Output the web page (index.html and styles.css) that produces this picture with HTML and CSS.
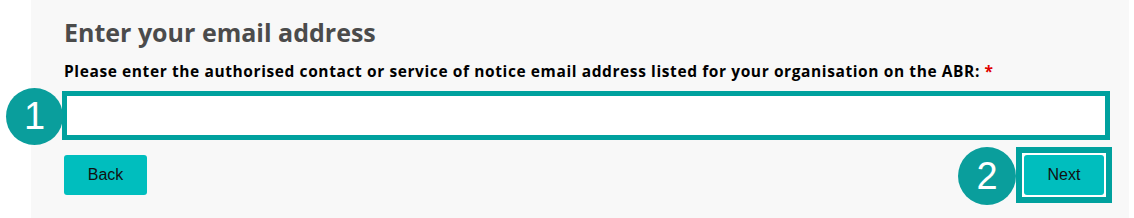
FILE: index.html
```html
<!DOCTYPE html>
<html lang="en">
<head>
<meta charset="utf-8">
<link rel="stylesheet" href="styles.css">
</head>
<body>
<div class="panel">
  <h2 class="title">Enter your email address</h2>
  <label class="label" for="email">Please enter the authorised contact or service of notice email address listed for your organisation on the ABR: <span class="req">*</span></label>
  <div class="field">
    <span class="marker marker-1">1</span>
    <input id="email" class="input" type="text">
  </div>
  <div class="actions">
    <button class="btn">Back</button>
    <div class="next-wrap">
      <span class="marker marker-2">2</span>
      <div class="highlight"><button class="btn btn-next">Next</button></div>
    </div>
  </div>
</div>
</body>
</html>
```
FILE: styles.css
```css
html, body {
  margin: 0;
  padding: 0;
  background: #ffffff;
}
.panel {
  margin-left: 31px;
  width: 1098px;
  height: 218px;
  box-sizing: border-box;
  background: #f8f8f8;
  padding: 17px 0 0 33px;
  font-family: "Open Sans", sans-serif;
}
.title {
  margin: 0;
  font-size: 25px;
  font-weight: 700;
  color: #4b4b4b;
  line-height: 30px;
}
.label {
  display: block;
  margin-top: 14px;
  font-size: 15.5px;
  font-weight: 700;
  letter-spacing: 0.6px;
  color: #000;
  line-height: 20px;
}
.req { color: #e00000; }
.field {
  position: relative;
  margin-top: 10px;
  margin-left: -2px;
  width: 1048px;
}
.input {
  display: block;
  box-sizing: border-box;
  width: 100%;
  height: 49px;
  border: 5px solid #00a19e;
  background: #fff;
  margin: 0;
  outline: none;
}
.marker {
  position: absolute;
  width: 57px;
  height: 57px;
  border-radius: 50%;
  background: #0a9e9c;
  color: #fff;
  font-family: "Liberation Sans", Arial, sans-serif;
  font-size: 38px;
  line-height: 57px;
  text-align: center;
}
.marker-1 { left: -56px; top: -3px; }
.actions {
  display: flex;
  justify-content: space-between;
  align-items: center;
  margin-top: 7px;
  width: 1048px;
}
.btn {
  width: 83px;
  height: 40px;
  border: none;
  border-radius: 3px;
  background: #00bebe;
  color: #111;
  font-family: "Liberation Sans", Arial, sans-serif;
  font-size: 16px;
  padding: 0;
}
.next-wrap {
  position: relative;
}
.marker-2 { left: -58px; top: 0; width: 58px; height: 58px; line-height: 58px; }
.highlight {
  border: 6px solid #00a19e;
  padding: 2px;
  background: #fff;
  display: flex;
}
.btn-next { width: 80px; }
```
